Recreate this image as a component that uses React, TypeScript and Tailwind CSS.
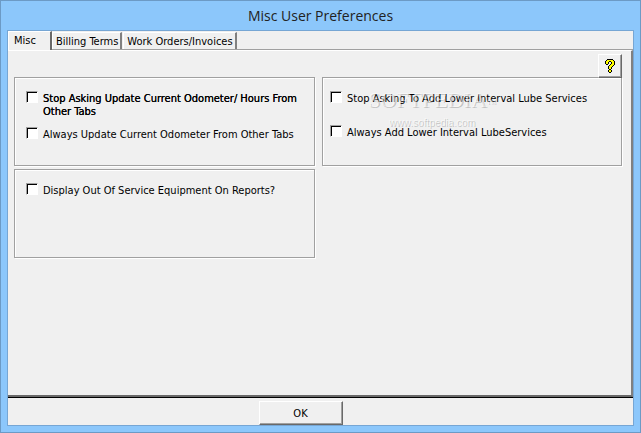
import React, { useState } from "react";

const tabs = [
  { id: "misc", label: "Misc" },
  { id: "billing", label: "Billing Terms" },
  { id: "orders", label: "Work Orders/Invoices" },
];

// Question mark bitmap: k = outline, y = fill
const HELP_ROWS = [
  "..kkkkkk..",
  ".kyyyyyyk.",
  "kyyykkyyyk",
  "kyyk..kyyk",
  "kyyk..kyyk",
  ".kk..kyyyk",
  "....kyyyk.",
  "...kyyyk..",
  "...kyyk...",
  "...kyyk...",
  "....kk....",
  "...kyyk...",
  "...kyyk...",
  "....kk....",
];

const HelpIcon: React.FC = () => (
  <svg width="10" height="14" viewBox="0 0 10 14" shapeRendering="crispEdges" aria-hidden="true">
    {HELP_ROWS.flatMap((row, y) =>
      row.split("").map((c, x) =>
        c === "." ? null : (
          <rect key={`${x}-${y}`} x={x} y={y} width="1" height="1" fill={c === "k" ? "#000" : "#ffff00"} />
        )
      )
    )}
  </svg>
);

const Frame: React.FC<{ children: React.ReactNode }> = ({ children }) => (
  <div className="min-h-[89px] border border-[#a0a0a0] px-[11px] pt-[13px] shadow-[1px_1px_0_#fff,inset_1px_1px_0_#fff]">
    {children}
  </div>
);

type OptionProps = {
  label: string;
  heavy?: boolean;
  checked: boolean;
  onChange: () => void;
};

const Option: React.FC<OptionProps> = ({ label, heavy, checked, onChange }) => (
  <label className="flex items-start gap-[5px]">
    <input
      type="checkbox"
      checked={checked}
      onChange={onChange}
      className="size-3 shrink-0 appearance-none border border-t-[#a0a0a0] border-r-white border-b-white border-l-[#a0a0a0] bg-white shadow-[inset_1px_1px_0_#000] checked:bg-black"
    />
    <span className={heavy ? "pt-px [text-shadow:0_0_0_#000]" : "pt-px"}>{label}</span>
  </label>
);

const App: React.FC = () => {
  const [activeTab, setActiveTab] = useState("misc");
  const [prefs, setPrefs] = useState<Record<string, boolean>>({});

  const toggle = (key: string) => setPrefs((prev) => ({ ...prev, [key]: !prev[key] }));
  const bind = (key: string) => ({ checked: !!prefs[key], onChange: () => toggle(key) });

  return (
    <div className="flex min-h-screen flex-col border border-[#6c9ac5] bg-[#8cc7fb] px-[6px] pb-[6px] font-['DejaVu_Sans_Condensed','DejaVu_Sans',sans-serif] text-[11px] leading-[13px] text-black">
      <h1 className="h-[29px] text-center font-['Open_Sans',sans-serif] text-[14px] leading-[30px] text-[#222]">
        Misc User Preferences
      </h1>

      <div className="flex grow flex-col border border-[#76a6d4] bg-[#f0f0f0]">
        {/* Tab strip */}
        <div role="tablist" className="flex h-[19px] items-end border-b border-[#a0a0a0]">
          {tabs.map((tab) => (
            <button
              key={tab.id}
              role="tab"
              aria-selected={activeTab === tab.id}
              onClick={() => setActiveTab(tab.id)}
              className={
                activeTab === tab.id
                  ? "-mb-[2px] h-[20px] border-t border-r-2 border-l border-t-white border-r-[#696969] border-l-white bg-[#f0f0f0] pr-[14px] pb-[2px] pl-[5px]"
                  : "mr-[1px] h-[17px] border-t border-r-2 border-l border-t-white border-r-[#808080] border-l-white pr-[2px] pl-[3px]"
              }
            >
              {tab.label}
            </button>
          ))}
        </div>

        {/* Tab page */}
        <main className="grow border-t border-r-2 border-b-2 border-t-white border-r-[#808080] border-b-[#696969] pr-[9px] pl-[6px]">
          <div className="flex h-[26px] justify-end pt-[3px]">
            <button
              aria-label="Help"
              className="z-10 flex size-6 shrink-0 items-center justify-center border border-t-white border-r-[#696969] border-b-[#696969] border-l-white bg-[#f0f0f0] shadow-[inset_-1px_-1px_0_#a0a0a0]"
            >
              <HelpIcon />
            </button>
          </div>
          <div className="relative grid grid-cols-[301fr_300fr] gap-x-[7px] gap-y-[3px]">
            <Frame>
              <div className="flex flex-col gap-[9px]">
                <Option
                  label="Stop Asking Update Current Odometer/ Hours From Other Tabs"
                  heavy
                  {...bind("stopOdometer")}
                />
                <Option label="Always Update Current Odometer From Other Tabs" {...bind("alwaysOdometer")} />
              </div>
            </Frame>
            <Frame>
              <div className="-ml-[4px] flex flex-col gap-[20px]">
                <Option label="Stop Asking To Add Lower Interval Lube Services" {...bind("stopLube")} />
                <Option label="Always Add Lower Interval LubeServices" {...bind("alwaysLube")} />
              </div>
            </Frame>
            <Frame>
              <Option label="Display Out Of Service Equipment On Reports?" {...bind("outOfService")} />
            </Frame>

            <div className="pointer-events-none absolute top-[12px] left-[353px] flex w-[130px] flex-col items-center font-['Liberation_Serif',serif] text-white/50 [text-shadow:1px_1px_0_#00000033]">
              <span className="text-[22px] leading-[22px]">
                SOFTPEDIA<sup className="text-[6px]">TM</sup>
              </span>
              <span className="font-['Liberation_Sans',sans-serif] text-[10px] leading-[24px]">www.softpedia.com</span>
            </div>
          </div>
        </main>

        <footer className="flex h-[28px] items-end justify-center border-t border-black pr-10">
          <button className="h-6 w-[84px] border border-t-white border-r-[#696969] border-b-[#696969] border-l-white shadow-[inset_-1px_-1px_0_#a0a0a0]">
            OK
          </button>
        </footer>
      </div>
    </div>
  );
};

export default App;
